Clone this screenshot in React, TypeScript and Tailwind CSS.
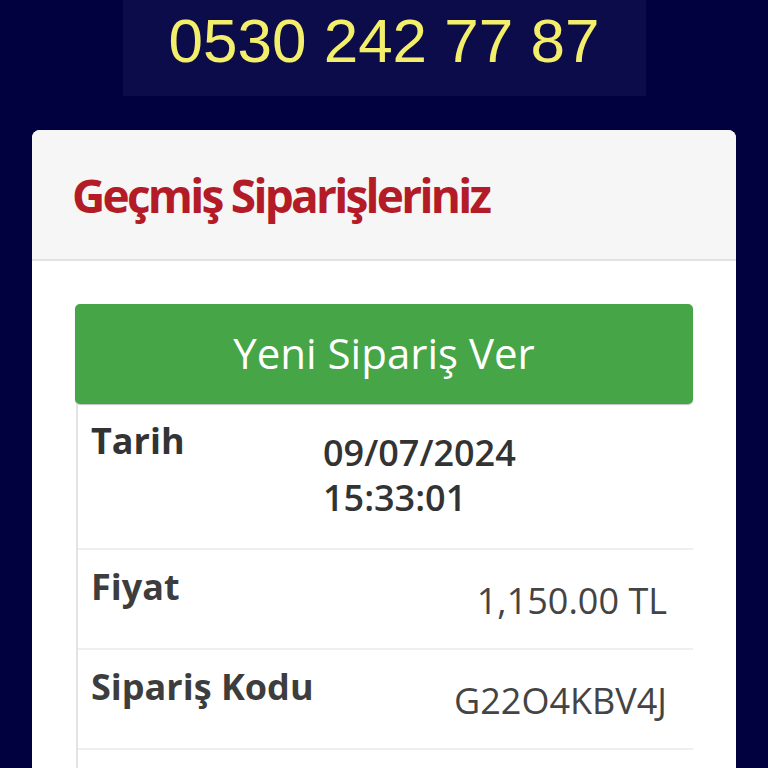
import React from "react";

export default function App() {
  return (
    <div className="w-[768px] h-[768px] overflow-hidden bg-[#02013f]" style={{ fontFamily: '"Open Sans", "Noto Sans", sans-serif' }}>
      <div className="flex justify-center">
        <div className="w-[523px] h-[96px] bg-[#0d0c4b] flex items-center justify-center">
          <span className="text-[62px] leading-none text-[#f3ef6b] -mt-[15px]" style={{ fontFamily: '"Liberation Sans", Arial, sans-serif' }}>
            0530 242 77 87
          </span>
        </div>
      </div>
      <div className="mt-[34px] mx-[32px] bg-white rounded-t-[8px] overflow-hidden">
        <div className="h-[131px] bg-[#f6f6f6] border-b-2 border-[#e2e2e2] pl-[40px] flex items-center">
          <h1 className="text-[46px] font-bold text-[#b31b26] tracking-[-0.06em] leading-none">Geçmiş Siparişleriniz</h1>
        </div>
        <div className="px-[43px] pt-[43px]">
          <div className="h-[100px] bg-[#46a546] rounded-[5px] flex items-center justify-center shadow-[0_1px_1px_rgba(0,0,0,0.25)]">
            <span className="text-white text-[42px] leading-none -mt-[2px]">Yeni Sipariş Ver</span>
          </div>
          <div className="border-l-2 border-[#e3e3e3] ml-[1px]">
            <div className="h-[146px] border-b-2 border-[#efefef] flex">
              <div className="w-[245px] pl-[13px] pt-[13px] text-[36px] font-bold text-[#333] leading-[48px]">Tarih</div>
              <div className="pt-[26px] text-[36px] font-semibold text-[#333] leading-[45px]">
                <div>09/07/2024</div>
                <div>15:33:01</div>
              </div>
            </div>
            <div className="h-[100px] border-b-2 border-[#efefef] flex justify-between pr-[26px]">
              <div className="pl-[13px] pt-[13px] text-[36px] font-bold text-[#3d3d3d] leading-[48px]">Fiyat</div>
              <div className="pt-[27px] text-[36px] text-[#444] leading-[48px]">1,150.00 TL</div>
            </div>
            <div className="h-[100px] border-b-2 border-[#efefef] flex justify-between pr-[26px]">
              <div className="pl-[13px] pt-[13px] text-[36px] font-bold text-[#3d3d3d] leading-[48px]">Sipariş Kodu</div>
              <div className="pt-[27px] text-[36px] text-[#444] leading-[48px]">G22O4KBV4J</div>
            </div>
            <div className="h-[100px]"></div>
          </div>
        </div>
      </div>
    </div>
  );
}
